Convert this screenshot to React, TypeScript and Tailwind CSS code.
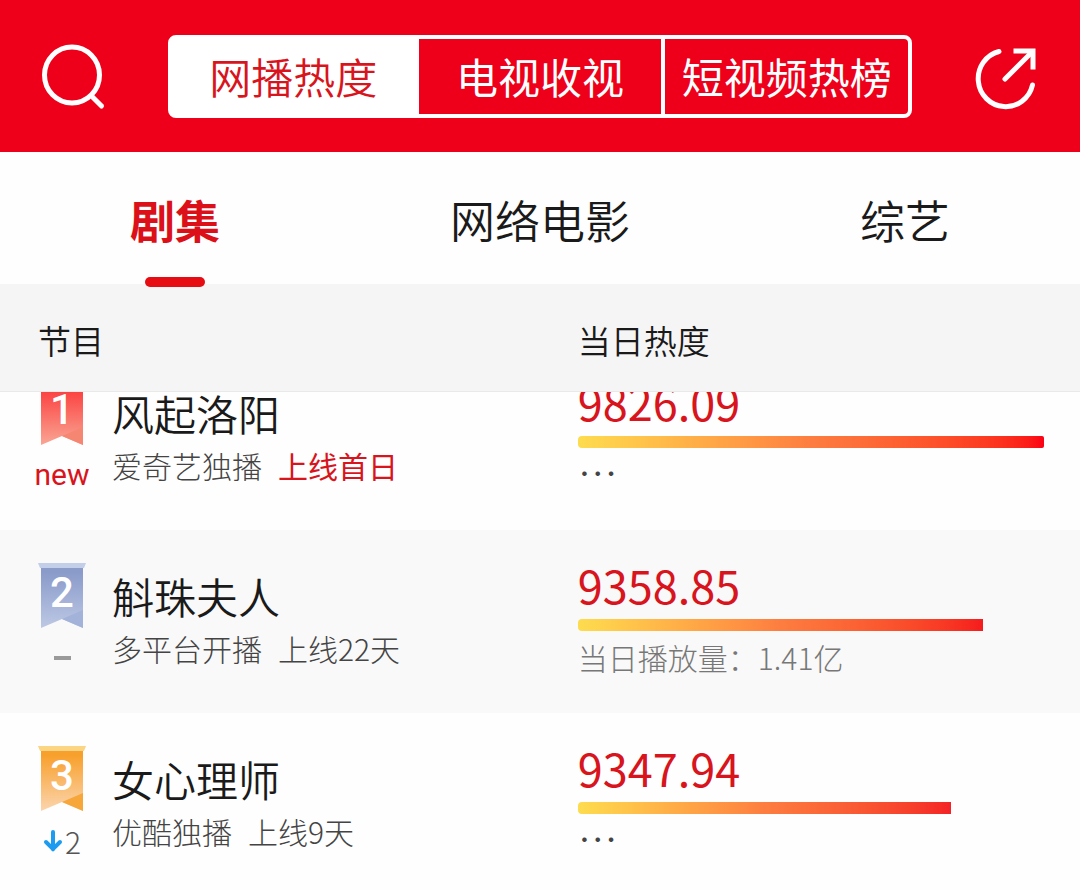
import { useLayoutEffect, useRef, useState } from "react";

type Program = {
  rank: number;
  title: string;
  platform: string;
  online: string;
  firstDay?: boolean;
  heat: string;
  percent: number;
  barEnd: string;
  plays?: string;
  trend: "new" | "same" | "down";
  step?: number;
};

const programs: Program[] = [
  {
    rank: 1,
    title: "风起洛阳",
    platform: "爱奇艺独播",
    online: "上线首日",
    firstDay: true,
    heat: "9826.09",
    percent: 100,
    barEnd: "to-[#fb0014] rounded-r-xs",
    trend: "new",
  },
  {
    rank: 2,
    title: "斛珠夫人",
    platform: "多平台开播",
    online: "上线22天",
    heat: "9358.85",
    percent: 87,
    barEnd: "to-[#f61a1d]",
    plays: "1.41亿",
    trend: "same",
  },
  {
    rank: 3,
    title: "女心理师",
    platform: "优酷独播",
    online: "上线9天",
    heat: "9347.94",
    percent: 80,
    barEnd: "to-[#f42226]",
    trend: "down",
    step: 2,
  },
];

const sources = ["网播热度", "电视收视", "短视频热榜"];
const categories = ["剧集", "网络电影", "综艺"];

const ribbonColors = [
  { bar: "#f9a3a0", top: "#fb3f3f", bottom: "#f9a694", fold: "#f58672" },
  { bar: "#c3cfe9", top: "#8a9bca", bottom: "#bdc8e4", fold: "#a3b2d8" },
  { bar: "#fbd583", top: "#f8a02c", bottom: "#fbd5ae", fold: "#f7a63a" },
];

function SearchIcon() {
  return (
    <svg viewBox="0 0 62 62" className="size-[62px] overflow-visible" fill="none" stroke="currentColor" strokeWidth="5" strokeLinecap="round">
      <ellipse cx="30" cy="30" rx="27.5" ry="28" />
      <path d="M50.5 52 59.500 61" />
    </svg>
  );
}

function ShareIcon() {
  return (
    <svg viewBox="0 0 62 62" className="size-[62px] overflow-visible" fill="none" stroke="currentColor" strokeWidth="5" strokeLinecap="round">
      <path d="M23 6.500A27.500 28 0 1 0 56.500 40" />
      <path d="M29 34 56 7" />
      <path d="M40 6H57V22" strokeLinecap="square" />
    </svg>
  );
}

function Ribbon({ rank }: { rank: number }) {
  const c = ribbonColors[rank - 1];
  const id = "ribbon" + rank;

  return (
    <div className="relative w-12 h-[65px]">
      <svg viewBox="0 0 48 65" className="w-full h-full">
        <defs>
          <linearGradient id={id} x1="0" y1="0" x2="0" y2="1">
            <stop offset="0.1" stopColor={c.top} />
            <stop offset="1" stopColor={c.bottom} />
          </linearGradient>
        </defs>
        <path d="M3 3H45V65L24 56 3 65Z" fill={`url(#${id})`} />
        <path d="M24 56 45 47V65Z" fill={c.fold} />
        <path d="M0 0H48L46 5H2Z" fill={c.bar} />
      </svg>
      <span className="absolute inset-x-0 top-2 text-center font-['Roboto',sans-serif] text-[42px] leading-[44px] font-medium text-white">
        {rank}
      </span>
    </div>
  );
}

function Trend({ program }: { program: Program }) {
  if (program.trend === "new") {
    return <span className="font-['Roboto',sans-serif] text-[30px] leading-[40px] text-[#d8141d]">new</span>;
  }

  if (program.trend === "same") {
    return <span className="w-[17px] h-1 bg-[#9a9a9a]" />;
  }

  return (
    <span className="flex items-center gap-[2px] text-[30px] leading-[40px] font-light text-[#555]">
      <svg viewBox="0 0 20 22" className="w-5 h-[22px]" fill="none" stroke="#1d9bf0" strokeWidth="4" strokeLinecap="round">
        <path d="M10 2V19" />
        <path d="M3 12 10 19 17 12" />
      </svg>
      {program.step}
    </span>
  );
}

export default function App() {
  const [source, setSource] = useState(sources[0]);
  const [category, setCategory] = useState(categories[0]);
  const listRef = useRef<HTMLDivElement>(null);

  useLayoutEffect(() => {
    listRef.current?.scrollTo(0, 45);
  }, []);

  return (
    <div
      lang="zh-CN"
      className="h-screen flex flex-col overflow-hidden bg-[#fefefe] text-[#1a1a1a] font-['Noto_Sans_CJK_SC',sans-serif]"
    >
      <header className="shrink-0 h-[152px] px-[42px] flex items-center gap-16 bg-[#ee001b] text-white">
        <button type="button" aria-label="搜索">
          <SearchIcon />
        </button>

        <div className="flex-1 h-[83px] flex border-4 border-white rounded-lg divide-x-4 divide-white">
          {sources.map((name) => (
            <button
              key={name}
              type="button"
              onClick={() => setSource(name)}
              className={
                "flex-1 text-[42px] leading-[48px] whitespace-nowrap " +
                (name === source ? "bg-white font-[350] text-[#d8141d]" : "")
              }
            >
              {name}
            </button>
          ))}
        </div>

        <button type="button" aria-label="分享">
          <ShareIcon />
        </button>
      </header>

      <nav className="relative z-20 shrink-0 h-[132px] px-[130px] flex justify-between">
        {categories.map((name) => (
          <button
            key={name}
            type="button"
            onClick={() => setCategory(name)}
            className={
              "relative pt-1 text-[45px] leading-[48px] " +
              (name === category ? "font-bold text-[#dc1018]" : "font-[350]")
            }
          >
            {name}
            {name === category && (
              <span className="absolute left-1/2 -bottom-[3px] w-[60px] h-[10px] -translate-x-1/2 rounded-full bg-[#e60c12]" />
            )}
          </button>
        ))}
      </nav>

      <div ref={listRef} className="flex-1 min-h-0 overflow-y-auto [scrollbar-width:none]">
        <table className="w-full table-fixed border-separate border-spacing-0">
          <thead className="sticky top-0 z-10">
            <tr className="h-[108px] text-left text-[33px] leading-[48px]">
              <th className="w-[53.5%] p-0 pt-1 pl-[38px] font-[350] bg-[#f5f5f5] border-b border-[#e9e9e9]">节目</th>
              <th className="p-0 pt-1 font-[350] bg-[#f5f5f5] border-b border-[#e9e9e9]">当日热度</th>
            </tr>
          </thead>

          <tbody>
            {programs.map((p) => (
              <tr key={p.rank} className="h-[183px] align-top even:bg-[#f9f9f9]">
                <td className="p-0 pl-[38px]">
                  <div className="flex gap-[26px]">
                    <div className="w-12 pt-[33px] flex flex-col items-center">
                      <Ribbon rank={p.rank} />
                      <div className="h-[60px] flex items-center">
                        <Trend program={p} />
                      </div>
                    </div>

                    <div className="pt-[42px]">
                      <h2 className="text-[42px] leading-[48px] font-[350]">{p.title}</h2>
                      <p className="mt-2 flex gap-4 text-[30px] leading-[40px] font-light text-[#444]">
                        <span>{p.platform}</span>
                        <span className={p.firstDay ? "font-normal text-[#d8141d]" : ""}>{p.online}</span>
                      </p>
                    </div>
                  </div>
                </td>

                <td className="p-0 pr-9">
                  <div className="pt-[31px]">
                    <div className="text-[45px] leading-[48px] text-[#d8141d]">{p.heat}</div>
                    <div
                      className={
                        "mt-[10px] h-3 rounded-l-sm bg-linear-to-r from-[#fddc4e] via-[#fd7d40] " + p.barEnd
                      }
                      style={{ width: p.percent + "%" }}
                    />
                    {p.plays ? (
                      <p className="mt-[6px] text-[30px] leading-[40px] font-light text-[#777]">当日播放量：{p.plays}</p>
                    ) : (
                      <p className="mt-[6px] text-[40px] leading-[36px] font-light text-[#444]">…</p>
                    )}
                  </div>
                </td>
              </tr>
            ))}
          </tbody>
        </table>
      </div>
    </div>
  );
}
